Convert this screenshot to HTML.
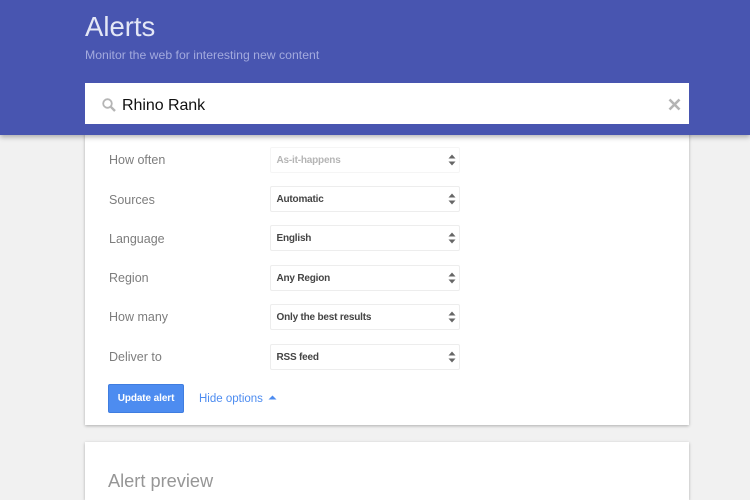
<!DOCTYPE html>
<html><head><meta charset="utf-8"><style>
html,body{margin:0;padding:0;width:750px;height:500px;overflow:hidden;background:#f1f1f1;font-family:"Liberation Sans",sans-serif}
div,a{position:absolute;white-space:nowrap}
#wrap{left:0;top:0;width:750px;height:500px;overflow:hidden;background:#f1f1f1;filter:blur(.3px)}
.hdr{left:0;top:0;width:750px;height:135px;background:#4855b0;box-shadow:0 2px 5px rgba(0,0,0,.3);z-index:2}
.card{left:85px;width:604px;background:#fff;box-shadow:0 1px 3px rgba(0,0,0,.28)}
.lbl{left:109px;font-size:12.5px;line-height:16px;color:#7d7d7d;z-index:3}
.sel{left:270px;width:188px;height:24px;border:1px solid #ededed;border-radius:2px;background:#fff;z-index:3}
.sel span{position:absolute;left:5.5px;top:5px;font-size:10px;letter-spacing:-.2px;line-height:16px;font-weight:bold;color:#444}
.sel svg{position:absolute;left:176.5px;top:6px}
</style></head><body>
<div id="wrap">
<div class="hdr">
<div style="left:85px;top:10px;font-size:27.5px;line-height:34px;color:#e4e7f6">Alerts</div>
<div style="left:85px;top:47px;font-size:12.25px;line-height:16px;color:#a3aade">Monitor the web for interesting new content</div>
<div style="left:85px;top:83px;width:604px;height:41px;background:#fff">
<svg style="position:absolute;left:16px;top:14px" width="16" height="16" viewBox="0 0 16 16"><circle cx="6.5" cy="6.5" r="4.3" fill="none" stroke="#b5b5b5" stroke-width="1.8"/><path d="M9.8 9.8L14 14" stroke="#b5b5b5" stroke-width="2.4"/></svg>
<div style="left:37px;top:12.5px;font-size:16px;line-height:20px;letter-spacing:-.05px;color:#111">Rhino Rank</div>
<svg style="position:absolute;left:583px;top:15px" width="13" height="13" viewBox="0 0 13 13"><path d="M1.5 1.5L11.5 11.5M11.5 1.5L1.5 11.5" stroke="#b4b4b4" stroke-width="2.6"/></svg>
</div>
</div>
<div class="card" style="top:130px;height:295px"></div>
<div class="card" style="top:442px;height:58px"></div>

<div class="lbl" style="top:152px">How often</div>
<div class="sel" style="top:147px;border-color:#f5f5f5"><span style="color:#b5b5b5">As-it-happens</span><svg width="8" height="12" viewBox="0 0 8 12"><path d="M4 0.5L7.5 4.5H.5zM4 11.5L7.5 7.5H.5z" fill="#666"/></svg></div>
<div class="lbl" style="top:192px">Sources</div>
<div class="sel" style="top:186px"><span>Automatic</span><svg width="8" height="12" viewBox="0 0 8 12"><path d="M4 0.5L7.5 4.5H.5zM4 11.5L7.5 7.5H.5z" fill="#666"/></svg></div>
<div class="lbl" style="top:231px">Language</div>
<div class="sel" style="top:225px"><span>English</span><svg width="8" height="12" viewBox="0 0 8 12"><path d="M4 0.5L7.5 4.5H.5zM4 11.5L7.5 7.5H.5z" fill="#666"/></svg></div>
<div class="lbl" style="top:270px">Region</div>
<div class="sel" style="top:265px"><span>Any Region</span><svg width="8" height="12" viewBox="0 0 8 12"><path d="M4 0.5L7.5 4.5H.5zM4 11.5L7.5 7.5H.5z" fill="#666"/></svg></div>
<div class="lbl" style="top:309px">How many</div>
<div class="sel" style="top:304px"><span>Only the best results</span><svg width="8" height="12" viewBox="0 0 8 12"><path d="M4 0.5L7.5 4.5H.5zM4 11.5L7.5 7.5H.5z" fill="#666"/></svg></div>
<div class="lbl" style="top:349px">Deliver to</div>
<div class="sel" style="top:344px"><span>RSS feed</span><svg width="8" height="12" viewBox="0 0 8 12"><path d="M4 0.5L7.5 4.5H.5zM4 11.5L7.5 7.5H.5z" fill="#666"/></svg></div>

<div style="left:108px;top:384px;width:74px;height:27px;background:#4d8cf0;border:1px solid #3f7de0;border-radius:2px;color:#fff;font-size:10px;letter-spacing:-.1px;font-weight:bold;line-height:28px;text-align:center;z-index:3">Update alert</div>
<div style="left:199px;top:390.5px;font-size:11.5px;line-height:16px;color:#4d8cf0;z-index:3">Hide options</div>
<svg style="position:absolute;left:268px;top:395px;z-index:3" width="9" height="5" viewBox="0 0 9 5"><path d="M4.5 0.5L8.5 4.5H.5z" fill="#4d8cf0"/></svg>
<div style="left:108px;top:469px;font-size:18.2px;line-height:24px;color:#969696;z-index:3">Alert preview</div>
</div>
</body></html>
